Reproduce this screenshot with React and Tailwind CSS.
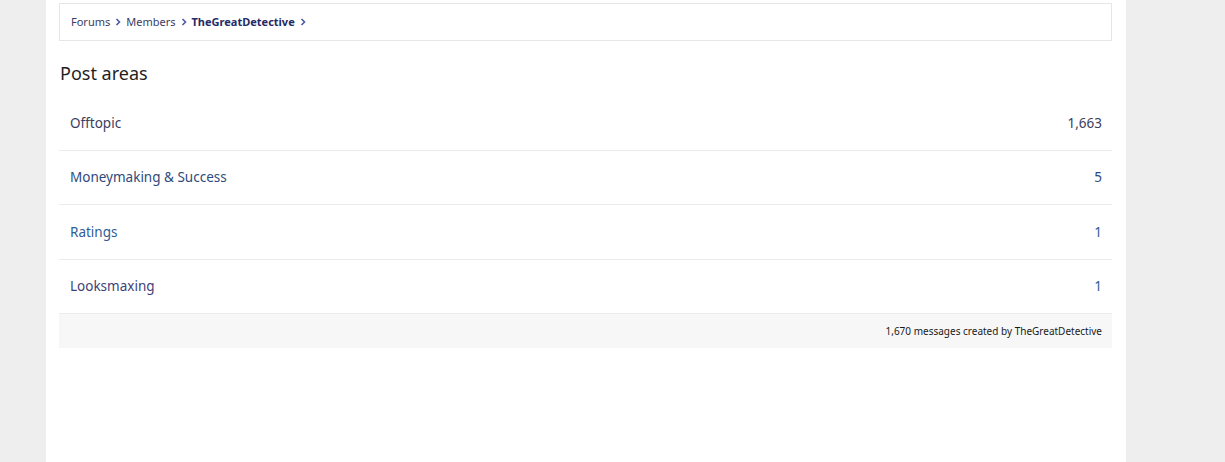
import React from "react";

const areas = [
  { name: "Offtopic", count: "1,663", nameColor: "text-[#3b3e5e]", countColor: "text-[#3b3e5e]" },
  { name: "Moneymaking & Success", count: "5", nameColor: "text-[#2e4a7c]", countColor: "text-[#2e4a7c]" },
  { name: "Ratings", count: "1", nameColor: "text-[#2f5c94]", countColor: "text-[#2f5c94]" },
  { name: "Looksmaxing", count: "1", nameColor: "text-[#3f3f78]", countColor: "text-[#2f5c94]" },
];

function Chevron() {
  return (
    <svg width="6" height="8" viewBox="0 0 6 8" className="mx-[5px]">
      <path d="M1.5 1 L4.5 4 L1.5 7" fill="none" stroke="#4b5aa6" strokeWidth="1.6" />
    </svg>
  );
}

export default function App() {
  return (
    <div className="min-h-[462px] bg-[#eeeeee] font-['Noto_Sans',sans-serif]">
      <div className="ml-[46px] w-[1080px] min-h-[462px] bg-white pl-[13px] pr-[14px] pt-[3px]">
        <div className="h-[38px] border border-[#e6e6e6] flex items-center px-[11px] text-[11px]">
          <span className="text-[#3a3d64]">Forums</span>
          <Chevron />
          <span className="text-[#3a3d64]">Members</span>
          <Chevron />
          <span className="font-bold text-[#262a66]">TheGreatDetective</span>
          <Chevron />
        </div>

        <h2 className="text-[18px] text-[#1f1f1f] mt-[19px] leading-[26px] ml-[1px]">Post areas</h2>

        <div className="mt-[10px]">
          {areas.map((a) => (
            <div
              key={a.name}
              className="flex items-center justify-between h-[54.6px] border-b border-[#ebebeb] pl-[11px] pr-[10px] text-[13.5px]"
            >
              <span className={a.nameColor}>{a.name}</span>
              <span className={a.countColor}>{a.count}</span>
            </div>
          ))}
          <div className="h-[34px] bg-[#f7f7f7] flex items-center justify-end pr-[10px] text-[10px] text-[#1a1a1a]">
            1,670 messages created by TheGreatDetective
          </div>
        </div>
      </div>
    </div>
  );
}
